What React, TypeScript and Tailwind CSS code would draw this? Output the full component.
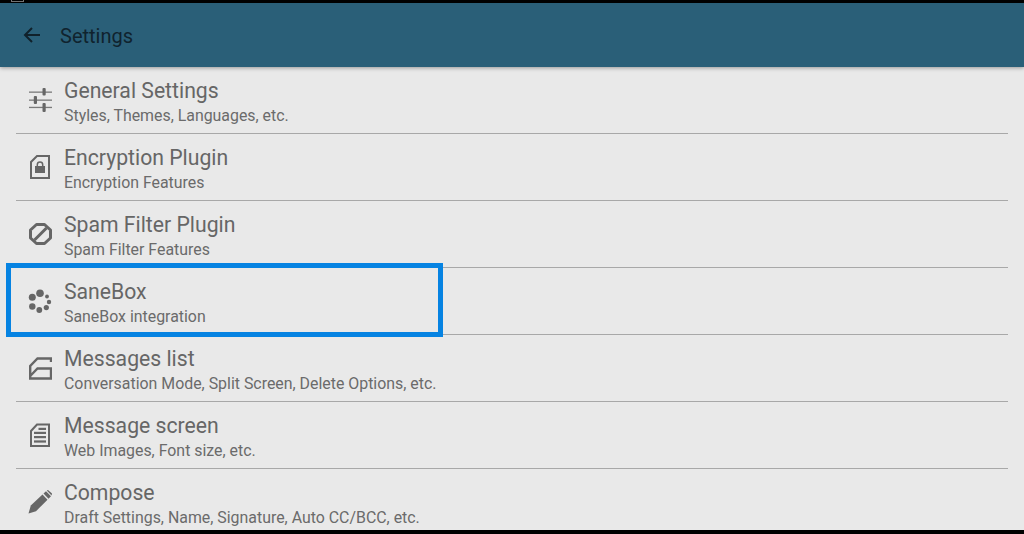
const rows = [
  { title: 'General Settings', sub: 'Styles, Themes, Languages, etc.', icon: 'sliders' },
  { title: 'Encryption Plugin', sub: 'Encryption Features', icon: 'lock' },
  { title: 'Spam Filter Plugin', sub: 'Spam Filter Features', icon: 'block' },
  { title: 'SaneBox', sub: 'SaneBox integration', icon: 'spinner' },
  { title: 'Messages list', sub: 'Conversation Mode, Split Screen, Delete Options, etc.', icon: 'list' },
  { title: 'Message screen', sub: 'Web Images, Font size, etc.', icon: 'doc' },
  { title: 'Compose', sub: 'Draft Settings, Name, Signature, Auto CC/BCC, etc.', icon: 'pencil' },
];

function RowIcon({ name }: { name: string }) {
  const c = '#666666';
  return (
    <svg width="24" height="24" viewBox="0 0 24 24" fill="none">
      {name === 'sliders' && (
        <g fill={c}>
          <rect x="1" y="3.5" width="23" height="1.3" opacity="0.85" />
          <rect x="14.5" y="0" width="3.2" height="7.5" rx="1" />
          <rect x="1" y="11.5" width="23" height="1.3" opacity="0.85" />
          <rect x="5.8" y="8" width="3.2" height="8" rx="1" />
          <rect x="1" y="18.8" width="23" height="1.3" opacity="0.85" />
          <rect x="14.5" y="15" width="3.2" height="9" rx="1" />
        </g>
      )}
      {name === 'lock' && (
        <g>
          <path d="M9 1H21V23H3V7Z" stroke={c} strokeWidth="2" />
          <rect x="7" y="11" width="10" height="7" fill={c} />
          <path d="M9.3 11.5V9.8a2.7 2.7 0 0 1 5.4 0v1.7" stroke={c} strokeWidth="1.5" />
        </g>
      )}
      {name === 'block' && (
        <g stroke={c} strokeWidth="3">
          <path d="M8.5 2.5H16.5L22.5 8V16L16.5 21.5H8.5L2.5 16V8Z" strokeLinejoin="round" />
          <path d="M6.5 18L18.5 6" />
        </g>
      )}
      {name === 'spinner' && (
        <g fill={c}>
          <circle cx="12" cy="4.2" r="3.8" />
          <circle cx="4.3" cy="8.2" r="3.5" />
          <circle cx="4.3" cy="17.5" r="3.2" />
          <circle cx="11.3" cy="21" r="2.9" />
          <circle cx="18.3" cy="18.6" r="2.6" />
          <circle cx="21" cy="13" r="2.2" />
          <circle cx="19" cy="7.5" r="1.9" />
        </g>
      )}
      {name === 'list' && (
        <path d="M23 6V2.5H9.5L2.2 10V22.5H23V12.5H9.5L2.2 20" stroke={c} strokeWidth="2.4" />
      )}
      {name === 'doc' && (
        <g>
          <path d="M9 1.5H21V23H3V8Z" stroke={c} strokeWidth="2" />
          <rect x="10.5" y="4.8" width="7.5" height="2.2" fill={c} />
          <rect x="6" y="8.8" width="12" height="2.2" fill={c} />
          <rect x="6" y="13" width="12" height="2.2" fill={c} />
          <rect x="6" y="17.4" width="12" height="2.2" fill={c} />
        </g>
      )}
      {name === 'pencil' && (
        <g fill={c}>
          <path d="M0.5 23.5L2.8 15.5L14.5 4.5L19.5 9.8L8 21.2Z" />
          <path d="M15.5 3.5L18 1.2L23 6.2L20.5 8.8Z" />
          <path d="M18.8 0.6L20 0L24 3.5L23.6 5.4Z" />
        </g>
      )}
    </svg>
  );
}

function Row({ title, sub, icon, last }: { title: string; sub: string; icon: string; last: boolean }) {
  return (
    <div className={`flex h-[67px] shrink-0 mx-4 border-b ${last ? 'border-transparent' : 'border-[#a8a8a8]'}`}>
      <div className="w-12 shrink-0 pl-3 flex items-center">
        <RowIcon name={icon} />
      </div>
      <div className="pt-[10px]">
        <div className="text-[21.2px] leading-[27px] text-[#666666]">{title}</div>
        <div className="text-[15.9px] leading-[20px] mt-[2px] text-[#6b6b6b]">{sub}</div>
      </div>
    </div>
  );
}

export default function App() {
  return (
    <div className="relative h-[534px] w-[1024px] overflow-hidden bg-black font-['Roboto',sans-serif]">
      {/* clipped status bar */}
      <div className="h-[3px] bg-black">
        <div className="ml-[11px] h-[2px] w-[13px] border-x border-b border-[#777777]" />
      </div>
      <header className="relative z-10 flex h-[64px] items-center bg-[#2a5f78] shadow-[0_1px_4px_rgba(0,0,0,0.35)]">
        <svg className="ml-[20px]" width="24" height="24" viewBox="0 0 24 24" fill="none" stroke="#10212b" strokeWidth="2">
          <path d="M20 12H5M12 5l-7 7 7 7" />
        </svg>
        <span className="ml-[16px] pt-[2px] text-[20px] text-[#10232e]">Settings</span>
      </header>
      <main className="flex h-[463px] flex-col overflow-hidden bg-[#e9e9e9]">
        {rows.map((r, i) => (
          <Row key={r.title} {...r} last={i === rows.length - 1} />
        ))}
      </main>
      <div className="absolute left-[6px] top-[263px] h-[74px] w-[437px] border-[5px] border-[#0683e2]" />
    </div>
  );
}
